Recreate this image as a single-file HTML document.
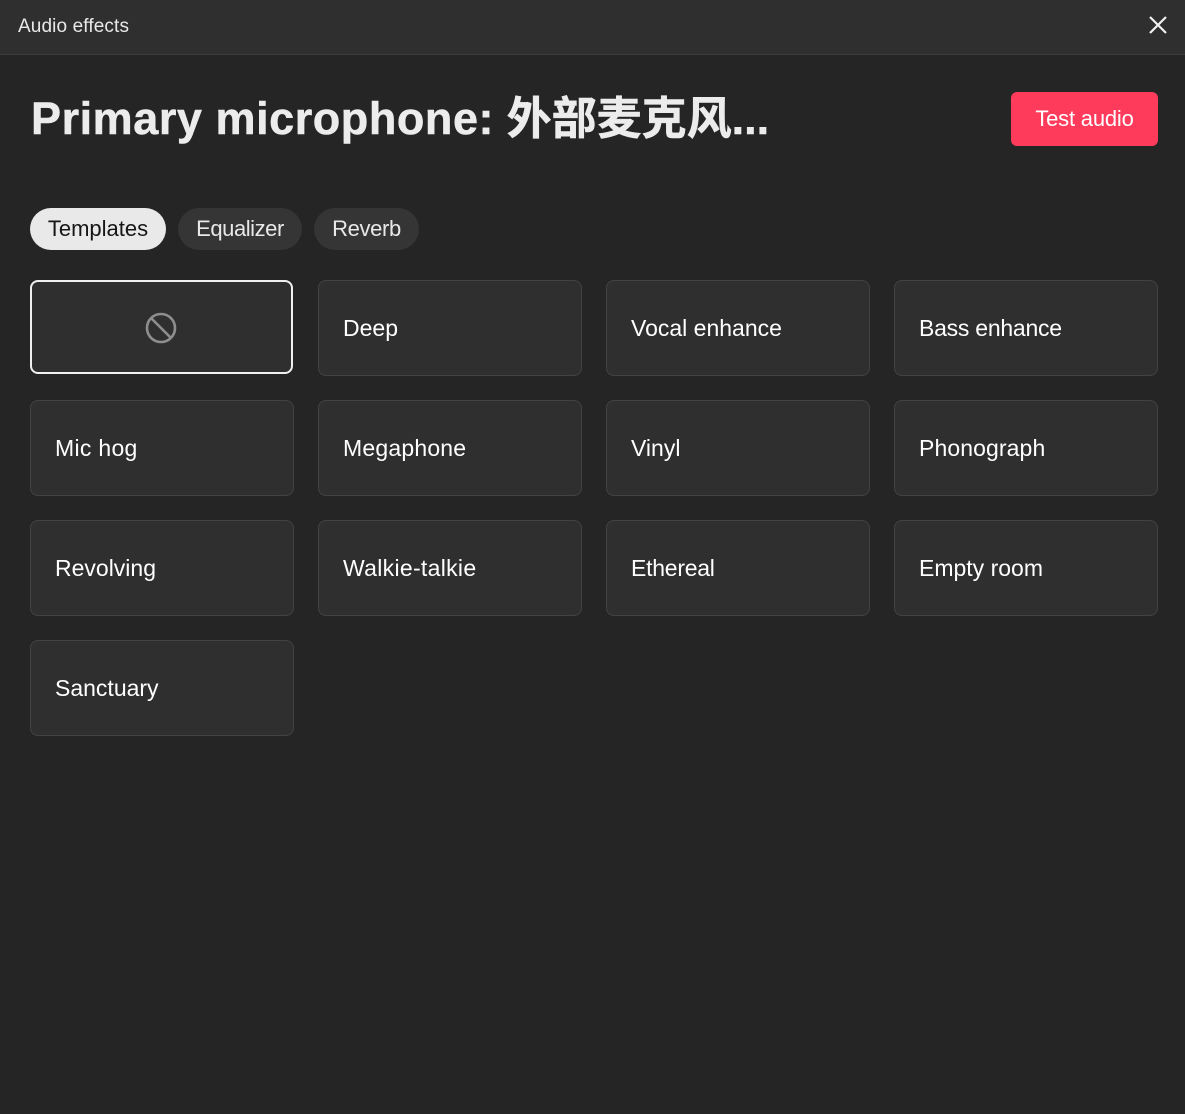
<!DOCTYPE html>
<html><head><meta charset="utf-8"><style>
html,body{margin:0;padding:0;background:#252525;width:1185px;height:1114px;overflow:hidden;font-family:"Liberation Sans","Noto Sans CJK SC",sans-serif}
.a{position:absolute;white-space:nowrap}
.bar{left:0;top:0;width:1185px;height:54px;background:#2f2f2f;border-bottom:1px solid #3c3c3c}
.c{position:absolute;box-sizing:border-box;width:264px;height:96px;background:#2f2f2f;border:1px solid #434343;border-radius:8px;color:#fff;font-size:23px;line-height:94px;padding-left:24px;white-space:nowrap}
.p{position:absolute;top:208px;height:42px;border-radius:21px;background:#353535;color:#e8e8e8;font-size:22px;line-height:41px;text-align:center;white-space:nowrap}
</style></head><body>
<div class="a bar"></div>
<div class="a" style="left:18px;top:15px;font-size:19px;letter-spacing:.12px;line-height:24px;color:#e8e8e8">Audio effects</div>
<svg class="a" style="left:1146px;top:13px" width="24" height="24" viewBox="0 0 24 24"><path d="M4 4L20 20M20 4L4 20" stroke="#f0f0f0" stroke-width="2.2" fill="none"/></svg>
<div class="a" style="left:31px;top:89px;font-size:45px;line-height:60px;font-weight:700;color:#ececec;-webkit-text-stroke:.5px #ececec"><span style="letter-spacing:.55px">Primary microphone:</span> 外部麦克风...</div>
<div class="a" style="left:1011px;top:92px;width:147px;height:54px;background:#ff3b5c;border-radius:6px;color:#fff;font-size:22px;letter-spacing:-.2px;line-height:54px;text-align:center">Test audio</div>
<div class="p" style="left:30px;width:136px;background:#e9e9e9;color:#161616">Templates</div>
<div class="p" style="left:178px;width:124px;letter-spacing:-.45px">Equalizer</div>
<div class="p" style="left:314px;width:105px;letter-spacing:-.35px">Reverb</div>
<div class="c" style="left:30px;top:280px;width:263px;height:94px;border:2px solid #f0f0f0"></div>
<svg class="a" style="left:145px;top:312px" width="32" height="32" viewBox="0 0 32 32"><circle cx="16" cy="16" r="14" stroke="#8e8e8e" stroke-width="2.6" fill="none"/><path d="M6 6L26 26" stroke="#8e8e8e" stroke-width="2.6"/></svg>
<div class="c" style="left:318px;top:280px">Deep</div>
<div class="c" style="left:606px;top:280px">Vocal enhance</div>
<div class="c" style="left:894px;top:280px;letter-spacing:-.25px">Bass enhance</div>
<div class="c" style="left:30px;top:400px;letter-spacing:.3px">Mic hog</div>
<div class="c" style="left:318px;top:400px;letter-spacing:.2px">Megaphone</div>
<div class="c" style="left:606px;top:400px">Vinyl</div>
<div class="c" style="left:894px;top:400px;letter-spacing:.1px">Phonograph</div>
<div class="c" style="left:30px;top:520px">Revolving</div>
<div class="c" style="left:318px;top:520px;letter-spacing:.3px">Walkie-talkie</div>
<div class="c" style="left:606px;top:520px;letter-spacing:-.25px">Ethereal</div>
<div class="c" style="left:894px;top:520px">Empty room</div>
<div class="c" style="left:30px;top:640px">Sanctuary</div>
</body></html>
